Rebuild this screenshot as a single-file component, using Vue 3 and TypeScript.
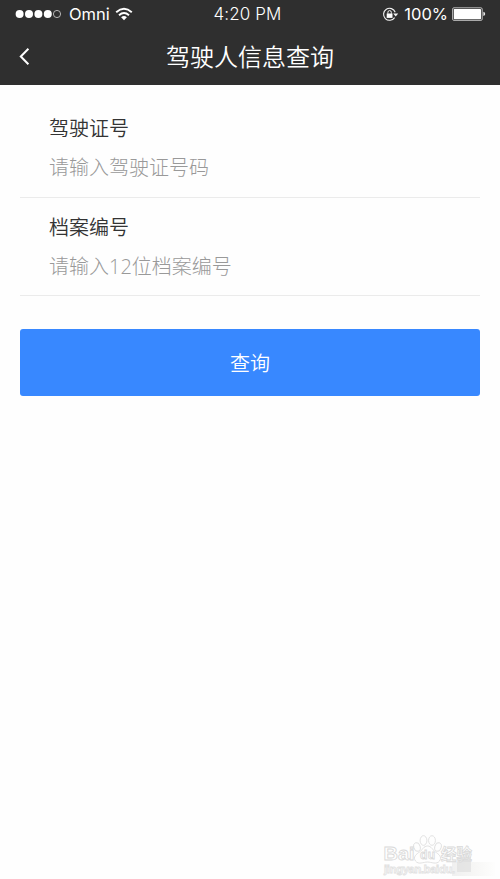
<script setup lang="ts">
import { ref } from 'vue'

interface Field {
  id: string
  label: string
  placeholder: string
}

const fields: Field[] = [
  { id: 'license', label: '驾驶证号', placeholder: '请输入驾驶证号码' },
  { id: 'archive', label: '档案编号', placeholder: '请输入12位档案编号' },
]
const values = ref<Record<string, string>>({ license: '', archive: '' })
</script>

<template>
  <main class="screen">
    <header class="top">
      <div class="status">
        <div class="carrier">
          <svg class="signal" width="46" height="10" viewBox="0 0 46 10">
            <circle v-for="n in 4" :key="n" :cx="n * 9.4 - 4.8" cy="5" r="4" fill="#fff" />
            <circle cx="42" cy="5" r="3.6" fill="none" stroke="#d5d5d5" stroke-width=".8" />
          </svg>
          <span class="omni">Omni</span>
          <svg class="wifi" width="18" height="14" viewBox="0 0 18 14" fill="none" stroke="#fff">
            <path d="M1.2 5.2Q9 -1.7 16.8 5.2" stroke-width="1.9" />
            <path d="M4 8.2Q9 3.8 14 8.2" stroke-width="1.9" />
            <path d="M6.1 10.2Q9 7.6 11.9 10.2L9 13.2Z" fill="#fff" stroke="none" />
          </svg>
        </div>
        <time class="time">4:20 PM</time>
        <div class="power">
          <svg class="lock" width="17" height="15" viewBox="0 0 17 15" fill="none" stroke="#f4f4f4">
            <path d="M12.6 10.6A6 6 0 1 1 13.2 5.2" stroke-width="1.1" />
            <path d="M11.2 6.4h5L13.7 9.4Z" fill="#f4f4f4" stroke="none" />
            <rect x="4.7" y="6.5" width="5.8" height="4.4" fill="#fff" stroke="none" />
            <path d="M5.9 6.8V5.3a1.7 1.7 0 0 1 3.4 0v1.5" stroke-width="1" />
          </svg>
          <span class="percent">100%</span>
          <svg class="battery" width="34" height="14" viewBox="0 0 34 14">
            <rect x=".6" y=".8" width="29.6" height="12.6" rx="1.3" fill="none" stroke="#ddd" stroke-width=".8" />
            <rect x="1.8" y="2" width="27.2" height="10.2" rx=".6" fill="#fff" />
            <path d="M31.4 4.8q1.8.5 1.8 2.1T31.4 9Z" fill="#eee" />
          </svg>
        </div>
      </div>
      <nav class="nav">
        <button class="back" aria-label="返回">
          <svg width="12" height="20" viewBox="0 0 12 20">
            <path d="M10.4 1.8L2.8 9.5l7.6 7.7" fill="none" stroke="#fff" stroke-width="2" />
          </svg>
        </button>
        <h1>驾驶人信息查询</h1>
      </nav>
    </header>

    <form class="form" @submit.prevent>
      <div v-for="f in fields" :key="f.id" class="field">
        <label :for="f.id">{{ f.label }}</label>
        <input :id="f.id" v-model="values[f.id]" type="text" :placeholder="f.placeholder" />
      </div>
      <button class="submit" type="submit">查询</button>
    </form>

    <aside class="mark">
      <svg width="120" height="46" viewBox="0 0 120 46">
        <defs>
          <linearGradient id="patch" x1="0" x2="1">
            <stop offset="0" stop-color="#e8e8e8" />
            <stop offset=".4" stop-color="#f0f0ee" />
            <stop offset="1" stop-color="#fdfdfc" />
          </linearGradient>
        </defs>
        <rect x="72" y="29" width="43" height="14" fill="url(#patch)" opacity=".65" />
        <g fill="#fff" stroke="#dcdcdc" stroke-width=".9">
          <ellipse cx="37" cy="14" rx="3.2" ry="4.4" transform="rotate(-15 37 14)" />
          <ellipse cx="43.5" cy="7.5" rx="3.4" ry="4.8" />
          <ellipse cx="52" cy="7.5" rx="3.4" ry="4.8" />
          <ellipse cx="58" cy="14" rx="3.2" ry="4.4" transform="rotate(15 58 14)" />
          <path d="M47.5 13c4 0 5 4 8 6s7 5 4 9-8 1-12 1-9 3-12-1 1-7 4-9 4-6 8-6Z" />
        </g>
        <g class="outline">
          <text x="3.5" y="27" font-size="18" textLength="31" lengthAdjust="spacingAndGlyphs">Bai</text>
          <text x="40" y="26" font-size="12" textLength="15">du</text>
          <text x="61" y="27" font-size="15.5" textLength="31">经验</text>
          <text class="site" x="4" y="40" font-size="11" textLength="71">jingyan.baidu.</text>
        </g>
        <rect x="77" y="24" width="14" height="15" fill="#dadada" opacity=".6" />
      </svg>
    </aside>
  </main>
</template>

<style>
body {
  margin: 0;
  background: #fff;
}
</style>

<style scoped>
.screen {
  position: relative;
  width: 500px;
  height: 879px;
  overflow: hidden;
  background: #fefefe;
  font-family: 'Liberation Sans', 'Noto Sans CJK SC', sans-serif;
}
.top {
  height: 85px;
  background: #2f2f2f;
  color: #fff;
}
.status {
  display: grid;
  grid-template-columns: 1fr auto 1fr;
  align-items: center;
  height: 28px;
  padding: 0 15px;
}
.carrier,
.power {
  display: flex;
  align-items: center;
}
.carrier {
  font: 16.5px/28px Inter, sans-serif;
}
.omni {
  margin-left: 8px;
}
.wifi {
  margin-left: 5px;
}
.time {
  margin-right: 5px;
  font: 300 17px/26px Inter, sans-serif;
  letter-spacing: 0.1px;
}
.power {
  justify-content: flex-end;
  margin-right: -1px;
}
.percent {
  margin: 0 4px 0 5px;
  font: 400 16.5px/28px Inter, sans-serif;
}
.nav {
  display: grid;
  grid-template-columns: 50px 1fr 50px;
  align-items: center;
  height: 55px;
}
.back {
  display: flex;
  padding: 2px 0 0 18px;
  border: 0;
  background: none;
}
h1 {
  margin: 0;
  font: 350 24px/55px 'Noto Sans CJK SC', sans-serif;
  text-align: center;
}
.form {
  padding: 14px 20px 0;
}
.field {
  display: flex;
  flex-direction: column;
  height: 98px;
  padding: 0 30px 0 29px;
  border-bottom: 1px solid #ebebeb;
}
.field + .field {
  height: 97px;
}
label {
  margin-top: 9px;
  color: #333;
  font: 350 20px/40px 'Noto Sans CJK SC', sans-serif;
}
input {
  width: 100%;
  height: 40px;
  padding: 0;
  border: 0;
  outline: 0;
  background: none;
  color: #333;
  font: 300 20px/40px 'Open Sans', 'Noto Sans CJK SC', sans-serif;
}
input::placeholder {
  color: #999;
  opacity: 1;
}
.submit {
  display: block;
  width: 100%;
  height: 67px;
  margin-top: 33px;
  padding: 0;
  border: 0;
  border-radius: 3px;
  background: #3888ff;
  color: #fff;
  font: 350 20px/67px 'Noto Sans CJK SC', sans-serif;
}
.mark {
  position: absolute;
  right: 0;
  bottom: 0;
  width: 120px;
  height: 46px;
  opacity: 0.95;
}
.outline {
  fill: #fff;
  stroke: #d8d8d8;
  stroke-width: 0.8px;
  font-family: 'Liberation Sans', 'Noto Sans CJK SC', sans-serif;
  font-weight: 700;
}
.site {
  stroke: #e0e0e0;
}
</style>
